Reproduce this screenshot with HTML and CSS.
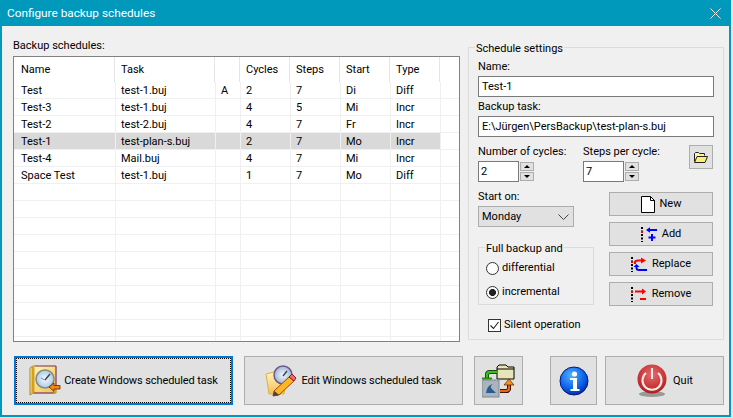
FILE: index.html
```html
<!DOCTYPE html>
<html lang="en">
<head>
<meta charset="utf-8">
<title>Configure backup schedules</title>
<link rel="stylesheet" href="styles.css">
</head>
<body>
<div class="window">
  <header class="titlebar">
    <span class="title">Configure backup schedules</span>
    <svg class="close" width="11" height="11" viewBox="0 0 11 11"><path d="M.5.5l10 10M10.5.5l-10 10" stroke="#fff" fill="none"/></svg>
  </header>
  <div class="content">
    <main class="main">
      <section class="list-pane">
        <div class="list-label">Backup schedules:</div>
        <div class="list">
          <table class="grid">
            <colgroup><col class="c1"><col class="c2"><col class="c3"><col class="c4"><col class="c4"><col class="c4"><col class="c4"><col class="c5"></colgroup>
            <thead><tr><th>Name</th><th>Task</th><th></th><th>Cycles</th><th>Steps</th><th>Start</th><th>Type</th><th></th></tr></thead>
            <tbody>
              <tr><td>Test</td><td>test-1.buj</td><td>A</td><td>2</td><td>7</td><td>Di</td><td>Diff</td><td></td></tr>
              <tr><td>Test-3</td><td>test-1.buj</td><td></td><td>4</td><td>5</td><td>Mi</td><td>Incr</td><td></td></tr>
              <tr><td>Test-2</td><td>test-2.buj</td><td></td><td>4</td><td>7</td><td>Fr</td><td>Incr</td><td></td></tr>
              <tr class="selected"><td>Test-1</td><td>test-plan-s.buj</td><td></td><td>2</td><td>7</td><td>Mo</td><td>Incr</td><td class="nosel"></td></tr>
              <tr><td>Test-4</td><td>Mail.buj</td><td></td><td>4</td><td>7</td><td>Mi</td><td>Incr</td><td></td></tr>
              <tr><td>Space Test</td><td>test-1.buj</td><td></td><td>1</td><td>7</td><td>Mo</td><td>Diff</td><td></td></tr>
              <tr><td></td><td></td><td></td><td></td><td></td><td></td><td></td><td></td></tr>
              <tr><td></td><td></td><td></td><td></td><td></td><td></td><td></td><td></td></tr>
              <tr><td></td><td></td><td></td><td></td><td></td><td></td><td></td><td></td></tr>
              <tr><td></td><td></td><td></td><td></td><td></td><td></td><td></td><td></td></tr>
              <tr><td></td><td></td><td></td><td></td><td></td><td></td><td></td><td></td></tr>
              <tr><td></td><td></td><td></td><td></td><td></td><td></td><td></td><td></td></tr>
              <tr><td></td><td></td><td></td><td></td><td></td><td></td><td></td><td></td></tr>
              <tr><td></td><td></td><td></td><td></td><td></td><td></td><td></td><td></td></tr>
              <tr><td></td><td></td><td></td><td></td><td></td><td></td><td></td><td></td></tr>
              <tr><td></td><td></td><td></td><td></td><td></td><td></td><td></td><td></td></tr>
            </tbody>
          </table>
        </div>
      </section>

      <fieldset class="settings">
        <legend>Schedule settings</legend>
        <div class="label name-label">Name:</div>
        <div class="input wide">Test-1</div>
        <div class="label task-label">Backup task:</div>
        <div class="input wide">E:\Jürgen\PersBackup\test-plan-s.buj</div>
        <div class="spin-row">
          <div class="spin-col first">
            <div class="label spin-label">Number of cycles:</div>
            <div class="spin">
              <div class="input num">2</div>
              <div class="arrows"><span class="arrow"><i class="up"></i></span><span class="arrow"><i class="down"></i></span></div>
            </div>
          </div>
          <div class="spin-col second">
            <div class="label spin-label">Steps per cycle:</div>
            <div class="spin">
              <div class="input num">7</div>
              <div class="arrows"><span class="arrow"><i class="up"></i></span><span class="arrow"><i class="down"></i></span></div>
            </div>
          </div>
          <button class="btn folder-btn" type="button">
            <svg width="14" height="11" viewBox="0 0 14 11"><path d="M.5 9.500V1.500l1-1h3l1 1h5v2" fill="#fff7a0" stroke="#222"/><path d="M.5 10.500l2.500-6h10.500l-2.500 6z" fill="#ffef70" stroke="#222"/></svg>
          </button>
        </div>
        <div class="lower">
          <div class="lower-left">
            <div class="label">Start on:</div>
            <div class="select"><span>Monday</span>
              <svg width="11" height="6" viewBox="0 0 11 6"><path d="M.5.5l5 5 5-5" fill="none" stroke="#444"/></svg>
            </div>
            <fieldset class="mode">
              <legend>Full backup and</legend>
              <div class="radio-row"><span class="radio"></span><span>differential</span></div>
              <div class="radio-row second-radio"><span class="radio on"></span><span>incremental</span></div>
            </fieldset>
            <div class="check-row">
              <svg class="check" width="13" height="13" viewBox="0 0 13 13"><rect x=".5" y=".5" width="12" height="12" fill="#fff" stroke="#333"/><path d="M2.500 6.500l3 3 5-6.500" fill="none" stroke="#222" stroke-width="1.100"/></svg>
              <span>Silent operation</span>
            </div>
          </div>
          <div class="actions">
            <button class="btn action" type="button">
              <svg width="14" height="17" viewBox="0 0 14 17"><path d="M.5.500h9l4 4v12H.500z" fill="#fff" stroke="#000"/><path d="M9.500.500v4h4" fill="none" stroke="#000"/></svg>
              <span>New</span>
            </button>
            <button class="btn action" type="button">
              <svg width="16" height="15" viewBox="0 0 16 15"><path d="M1 0v15" stroke="#000" stroke-width="2" stroke-dasharray="2 1.500" fill="none"/><rect x="0" y="4" width="2" height="2" fill="#e00"/><path d="M7 3h9" stroke="#00f" stroke-width="2"/><path d="M9 .200L5 3l4 2.800z" fill="#00f"/><path d="M11 7v7M7.500 10.500h7" stroke="#00f" stroke-width="2"/></svg>
              <span>Add</span>
            </button>
            <button class="btn action" type="button">
              <svg width="16" height="15" viewBox="0 0 16 15"><path d="M1 0v15" stroke="#000" stroke-width="2" stroke-dasharray="2 1.500" fill="none"/><rect x="0" y="4" width="2" height="2" fill="#e00"/><path d="M4 7V5.500Q4 3.500 7 3.500h4" fill="none" stroke="#f00" stroke-width="2"/><path d="M10 .500l5 3-5 3z" fill="#f00"/><path d="M16 13H8Q5.500 13 5.500 11v-1" fill="none" stroke="#00f" stroke-width="2"/><path d="M2.500 10l3-3 3 3z" fill="#00f"/></svg>
              <span>Replace</span>
            </button>
            <button class="btn action" type="button">
              <svg width="16" height="15" viewBox="0 0 16 15"><path d="M1 0v15" stroke="#000" stroke-width="2" stroke-dasharray="2 1.500" fill="none"/><rect x="0" y="4" width="2" height="2" fill="#e00"/><path d="M4 4.500h8" stroke="#f00" stroke-width="2"/><path d="M11 1.500l4 3-4 3z" fill="#f00"/><path d="M9 12h6" stroke="#f00" stroke-width="2"/></svg>
              <span>Remove</span>
            </button>
          </div>
        </div>
      </fieldset>
    </main>

    <footer class="footer">
      <button class="btn big primary" type="button">
        <span class="focus">
          <svg width="32" height="32" viewBox="0 0 32 32">
            <defs>
              <linearGradient id="gold" x1="0" y1="0" x2="1" y2="1"><stop offset="0" stop-color="#fff8c8"/><stop offset="1" stop-color="#eec040"/></linearGradient>
              <radialGradient id="face"><stop offset="0" stop-color="#f4fbff"/><stop offset="1" stop-color="#a8cce4"/></radialGradient>
            </defs>
            <path d="M1 3l3-2h23v27H4l-3 2z" fill="url(#gold)" stroke="#a88420"/>
            <path d="M4 1.500v27" stroke="#d4a020" stroke-width="3"/>
            <path d="M27 1v22M5 28h20" stroke="#8a3a90"/>
            <path d="M6 1h21" stroke="#8a3a90" stroke-width=".7"/>
            <circle cx="16" cy="14" r="9" fill="url(#face)" stroke="#888" stroke-width="1.500"/>
            <path d="M16 15l5-6" stroke="#445" stroke-width="1.500"/>
            <path d="M16 15l-4-2" stroke="#889"/>
            <path d="M20 22l5-4v2.500h6v3.500h-6v2.500z" fill="#f08a10" stroke="#702000" stroke-width=".8"/>
          </svg>
          <span>Create Windows scheduled task</span>
        </span>
      </button>
      <button class="btn big second-big" type="button">
        <svg width="32" height="32" viewBox="0 0 32 32">
          <defs><linearGradient id="fold" x1="0" y1="0" x2="0" y2="1"><stop offset="0" stop-color="#fff4c0"/><stop offset="1" stop-color="#f4c050"/></linearGradient>
          <radialGradient id="face2"><stop offset="0" stop-color="#f4fbff"/><stop offset="1" stop-color="#a0b4d0"/></radialGradient></defs>
          <path d="M1 9l8-2 4 2h9l-3 20H4z" fill="url(#fold)" stroke="#e0b040"/>
          <circle cx="18" cy="10" r="9" fill="url(#face2)" stroke="#6a5a90" stroke-width="1.500"/>
          <path d="M18 11l4-5" stroke="#445" stroke-width="1.500"/>
          <path d="M9 26l15-14 5 4-15 14-6 1z" fill="#f8b820" stroke="#b03828"/>
          <path d="M24 12l3-3 4 4-2 3z" fill="#f06868" stroke="#902020"/>
          <path d="M8 31l1.500-5 4.500 4z" fill="#444"/>
        </svg>
        <span>Edit Windows scheduled task</span>
      </button>
      <button class="btn sync" type="button">
        <svg width="33" height="34" viewBox="0 0 33 34">
          <path d="M15 3l2-2h7l2 2h6v12H15z" fill="#e8e4b8" stroke="#000"/>
          <path d="M15 5h17" stroke="#000"/>
          <path d="M15 8H8Q5 8 5 11v4" fill="none" stroke="#102808" stroke-width="4"/>
          <path d="M15 8H8Q5 8 5 11v4" fill="none" stroke="#3cc018" stroke-width="2.500"/>
          <path d="M0 14h10l-5 6z" fill="#3cc018" stroke="#185008" stroke-width=".7"/>
          <rect x="0" y="16" width="17" height="17" fill="#a8b4be" stroke="#808890"/>
          <path d="M4 29Q5 21 11 20q-3 2-2 4l5 5z" fill="#2a5a90"/>
          <path d="M18 27h6q3 0 3-3v-4" fill="none" stroke="#000" stroke-width="4"/>
          <path d="M18 27h6q3 0 3-3v-4" fill="none" stroke="#f06010" stroke-width="2.500"/>
          <path d="M22 21l5-6 5 6z" fill="#f89020" stroke="#502000" stroke-width=".7"/>
        </svg>
      </button>
      <button class="btn info" type="button">
        <svg width="30" height="30" viewBox="0 0 30 30">
          <defs><radialGradient id="blue" cx=".4" cy=".3" r=".8"><stop offset="0" stop-color="#50b0ff"/><stop offset=".6" stop-color="#0a60e8"/><stop offset="1" stop-color="#001a90"/></radialGradient></defs>
          <circle cx="15" cy="15" r="14" fill="url(#blue)" stroke="#001480"/>
          <circle cx="15.500" cy="8" r="2.600" fill="#fff"/>
          <path d="M11 12h7v11h2.500v2h-9v-2H14v-9h-3z" fill="#fff"/>
        </svg>
      </button>
      <button class="btn quit" type="button">
        <svg width="32" height="34" viewBox="0 0 32 34">
          <defs><radialGradient id="red" cx=".5" cy=".35" r=".7"><stop offset="0" stop-color="#e86a6a"/><stop offset=".7" stop-color="#c43030"/><stop offset="1" stop-color="#9a1c1c"/></radialGradient></defs>
          <ellipse cx="16" cy="30" rx="13" ry="3" fill="#999"/>
          <circle cx="16" cy="15" r="14.500" fill="url(#red)"/>
          <path d="M10 9a9.500 9.500 0 1 0 12 0" fill="none" stroke="#fbeeee" stroke-width="2"/>
          <path d="M16 4v11" stroke="#fbeeee" stroke-width="2"/>
        </svg>
        <span>Quit</span>
      </button>
    </footer>
  </div>
</div>
</body>
</html>
```
FILE: styles.css
```css
* { box-sizing: border-box; }
html, body { margin: 0; padding: 0; }
body {
  width: 733px;
  height: 418px;
  overflow: hidden;
  font: 11px/14px Roboto, "Open Sans", sans-serif;
  color: #000;
  background: #e6e8e8;
}
.window {
  width: 731px;
  height: 417px;
  display: flex;
  flex-direction: column;
  border: 2px solid #0099bc;
  border-top: 0;
  background: #f0f0f0;
}
.titlebar {
  height: 26px;
  flex: none;
  margin: 0 -2px;
  padding: 0 10px 0 7px;
  display: flex;
  align-items: center;
  justify-content: space-between;
  background: #0099bc;
  color: #fff;
  font-size: 11.8px;
}
.content {
  flex: 1;
  padding: 0 5px 0 11px;
  display: flex;
  flex-direction: column;
}
.main { display: flex; height: 316px; flex: none; }
.list-pane { width: 447px; flex: none; padding-top: 12px; }
.list-label { height: 18px; line-height: 16px; }
.list {
  height: 286px;
  border: 1px solid #828282;
  background: #fff;
  overflow: hidden;
}
.grid {
  table-layout: fixed;
  width: 445px;
  border-collapse: separate;
  border-spacing: 0;
}
.c1 { width: 102px; }
.c2 { width: 100px; }
.c3 { width: 25px; }
.c4 { width: 50px; }
.c5 { width: 18px; }
th {
  height: 25px;
  font-weight: 400;
  text-align: left;
  padding: 0 0 0 5px;
  border-right: 1px solid #fff;
  box-shadow: inset -1px 0 0 #e5e5e5;
}
td {
  height: 17px;
  line-height: 15px;
  padding: 1px 0 0 5px;
  border-right: 1px solid #f0f0f0;
  border-bottom: 1px solid #f0f0f0;
  white-space: nowrap;
  overflow: hidden;
}
th:first-child, td:first-child { padding-left: 7px; }
th:last-child, td:last-child { border-right: 0; box-shadow: none; }
.selected td { background: #d9d9d9; }
.selected td.nosel { background: #fff; }
.settings {
  margin: 14px 0 0 8px;
  padding: 0 9px 0 9px;
  width: 255px;
  height: 300px;
  border: 1px solid #dcdcdc;
}
.settings > legend { margin-left: -3px; padding: 0 1px; line-height: 17px; height: 15px; }
.label { height: 14px; line-height: 16px; }
.spin-label { line-height: 18px; }
.name-label { margin-top: 4px; margin-bottom: 3px; }
.task-label { margin-top: 2px; margin-bottom: 3px; }
.input {
  height: 21px;
  background: #fff;
  border: 1px solid #7a7a7a;
  line-height: 19px;
  padding-left: 3px;
  white-space: nowrap;
}
.wide { width: 236px; }
.spin-row { display: flex; margin-top: 6px; height: 39px; }
.spin-col { display: flex; flex-direction: column; gap: 4px; }
.first { width: 105px; }
.second { width: 106px; }
.spin { display: flex; gap: 1px; }
.num { width: 41px; padding-left: 2px; }
.arrows { display: flex; flex-direction: column; gap: 1px; padding-top: 1px; }
.arrow {
  width: 14px;
  height: 9px;
  background: #e1e1e1;
  border: 1px solid #adadad;
  display: flex;
  align-items: center;
  justify-content: center;
}
.arrow i { width: 0; height: 0; border-left: 3px solid transparent; border-right: 3px solid transparent; }
.up { border-bottom: 3px solid #000; }
.down { border-top: 3px solid #000; }
.btn {
  font: inherit;
  color: #000;
  padding: 0;
  margin: 0;
  background: #e1e1e1;
  border: 1px solid #adadad;
  border-radius: 0;
  display: flex;
  align-items: center;
  justify-content: center;
}
.folder-btn { width: 24px; height: 24px; margin-top: 2px; }
.lower { display: grid; grid-template-columns: 131px 104px; margin-top: 0; }
.lower-left { padding-top: 7px; }
.select {
  width: 96px;
  height: 21px;
  margin-top: 3px;
  background: #e1e1e1;
  border: 1px solid #adadad;
  padding: 0 4px 0 3px;
  display: flex;
  align-items: center;
  justify-content: space-between;
}
.mode {
  margin: 13px 0 0 0;
  padding: 0 0 0 7px;
  width: 116px;
  height: 65px;
  border: 1px solid #dcdcdc;
}
.mode legend { margin-left: -1px; padding: 0 1px; line-height: 17px; height: 15px; }
.radio-row { display: flex; align-items: center; gap: 3px; height: 14px; margin-top: 6px; }
.second-radio { margin-top: 10px; }
.radio {
  width: 13px;
  height: 13px;
  border-radius: 50%;
  border: 1px solid #333;
  background: #fff;
  flex: none;
}
.radio.on { background: radial-gradient(circle, #222 0 3.200px, #fff 3.800px); }
.check-row { display: flex; align-items: center; gap: 3px; margin: 13px 0 0 10px; height: 14px; }
.actions { display: flex; flex-direction: column; gap: 6px; padding-top: 10px; }
.action { width: 104px; height: 24px; gap: 5px; }
.footer { display: flex; margin-top: 14px; height: 49px; }
.big { height: 49px; width: 219px; gap: 4px; letter-spacing: -.1px; }
.primary { margin-left: 1px; border: 2px solid #0078d7; padding: 0; }
.focus {
  flex: 1;
  align-self: stretch;
  border: 1px dotted #000;
  display: flex;
  align-items: center;
  justify-content: center;
  gap: 3px;
}
.second-big { margin-left: 11px; }
.sync { width: 49px; height: 49px; margin-left: 11px; }
.info { width: 47px; height: 49px; margin-left: 27px; }
.quit { width: 119px; height: 49px; margin-left: 8px; gap: 5px; }
```
